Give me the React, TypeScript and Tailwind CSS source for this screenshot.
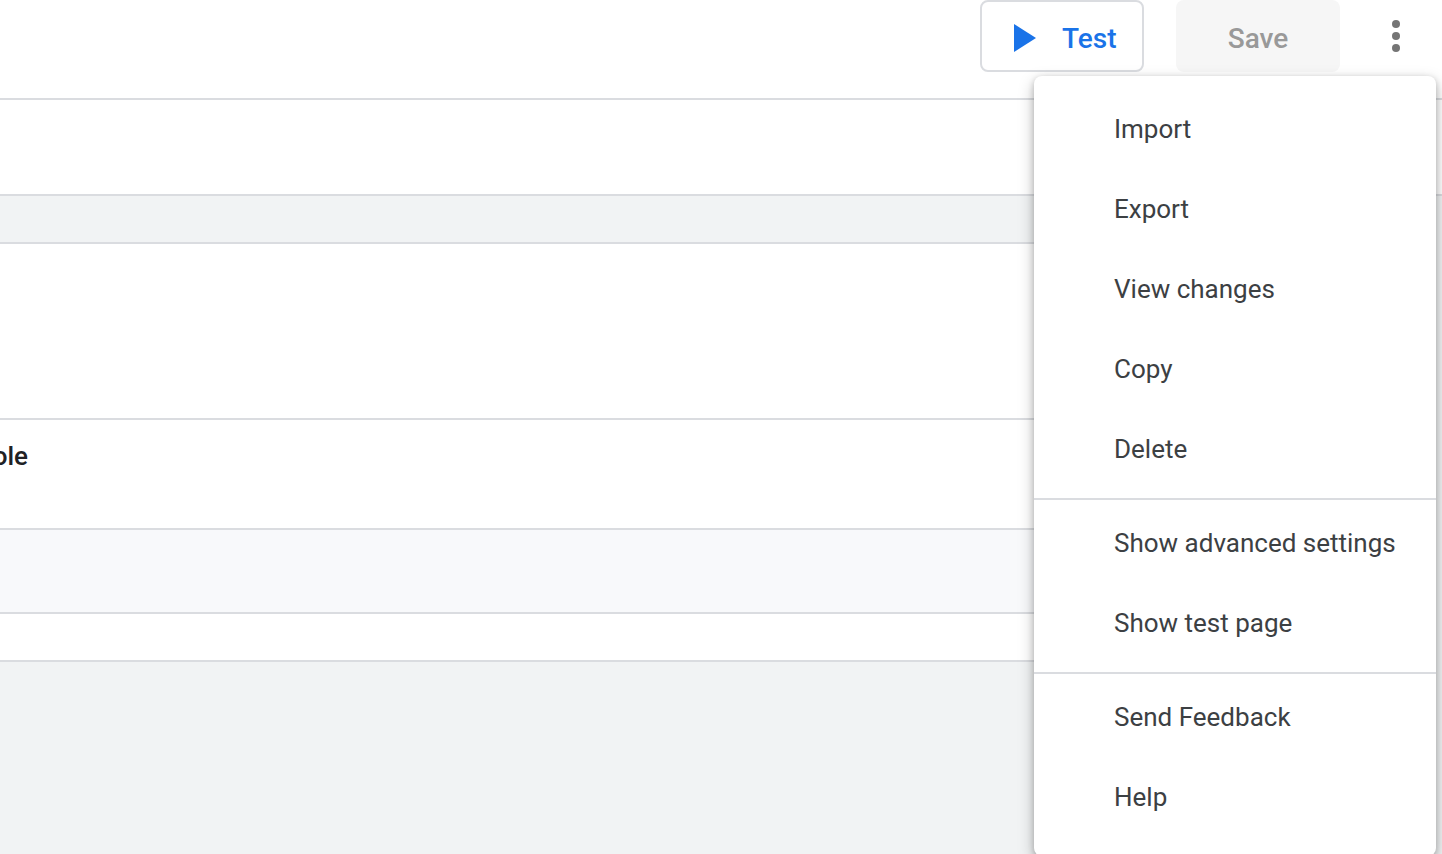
const groups: string[][] = [
  ["Import", "Export", "View changes", "Copy", "Delete"],
  ["Show advanced settings", "Show test page"],
  ["Send Feedback", "Help"],
];

function OverflowMenu() {
  return (
    <div
      role="menu"
      className="absolute right-0 top-full mt-1 w-[402px] rounded-lg bg-white py-4 shadow-[0_6px_16px_rgba(0,0,0,0.25),0_2px_6px_rgba(0,0,0,0.2)]"
    >
      {groups.map((items, index) => (
        <div key={items[0]}>
          {index > 0 && <hr className="my-1.5 border-t-2 border-[#dadce0]" />}
          {items.map((item) => (
            <button
              key={item}
              type="button"
              role="menuitem"
              className="flex h-20 w-full items-center whitespace-nowrap pb-1.5 pl-20 text-left text-[26px] leading-8 text-[#3c4043]"
            >
              {item}
            </button>
          ))}
        </div>
      ))}
    </div>
  );
}

function Toolbar() {
  return (
    <header className="flex h-[100px] items-start justify-end border-b-2 border-[#dadce0] bg-white pr-1.5">
      <button
        type="button"
        className="mr-8 flex h-[72px] w-[164px] items-center rounded-lg border-2 border-[#dadce0] bg-white pl-8 pt-1.5 text-[28px] font-medium leading-9 text-[#1a73e8]"
      >
        <svg viewBox="0 0 22 28" className="mb-0.5 mr-[26px] h-7 w-[22px]" fill="currentColor" aria-hidden="true">
          <path d="M0 0v28l22-14z" />
        </svg>
        <span>Test</span>
      </button>
      <button
        type="button"
        disabled
        className="h-[72px] w-[164px] rounded-lg bg-[#f6f6f6] pt-1.5 text-[28px] font-medium leading-9 text-[#999999]"
      >
        Save
      </button>
      <div className="relative flex h-[72px] w-24 items-center justify-center pl-4">
        <button type="button" aria-label="More options" aria-haspopup="menu" aria-expanded="true">
          <svg viewBox="0 0 8 32" className="h-8 w-2" fill="#757575" aria-hidden="true">
            <circle cx="4" cy="4" r="4" />
            <circle cx="4" cy="16" r="4" />
            <circle cx="4" cy="28" r="4" />
          </svg>
        </button>
        <OverflowMenu />
      </div>
    </header>
  );
}

export default function App() {
  return (
    <div className="relative min-h-screen overflow-hidden bg-[#f1f3f4] font-['Roboto',sans-serif]">
      <Toolbar />
      <div className="h-24 border-b-2 border-[#dadce0] bg-white" />
      <main className="pr-12 pt-[46px]">
        <section className="border-y-2 border-[#dadce0] bg-white">
          <div className="h-[174px]" />
          <div className="h-[110px] border-t-2 border-[#dadce0] pt-5">
            <div className="flex w-7 justify-end overflow-hidden text-[26px] font-medium leading-8 text-[#202124]">
              <span>ole</span>
            </div>
          </div>
          <div className="h-[86px] border-y-2 border-[#dadce0] bg-[#f8f9fb]" />
          <div className="h-[46px]" />
        </section>
      </main>
    </div>
  );
}
